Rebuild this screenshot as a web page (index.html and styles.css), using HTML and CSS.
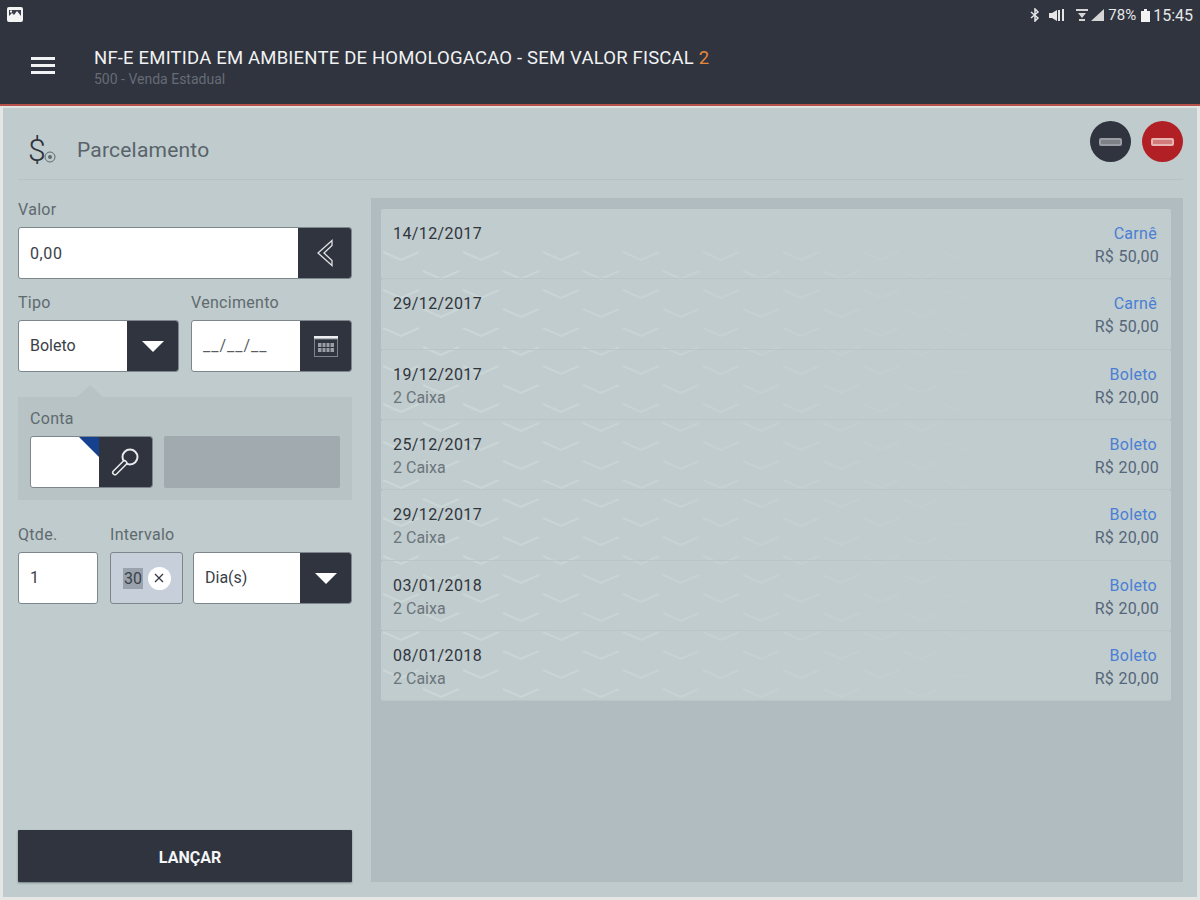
FILE: index.html
```html
<!DOCTYPE html>
<html lang="pt-BR">
<head>
  <meta charset="UTF-8" />
  <title>Parcelamento</title>
  <link rel="stylesheet" href="styles.css">
</head>
<body>
  <header class="appbar">
    <div class="statusbar">
      <svg class="status-pic" width="16" height="16" viewBox="0 0 16 16">
        <rect x="0" y="0" width="16" height="15" rx="2" fill="#f4f4f4"/>
        <path d="M2 3h12v6H2z" fill="#3a3f49"/>
        <path d="M2 9l3-3 2 2 3-4 4 5z" fill="#f4f4f4"/>
        <rect x="3" y="3.500" width="2" height="2" fill="#f4f4f4"/>
      </svg>
      <div class="status-right">
        <svg width="10" height="14" viewBox="0 0 10 14" fill="none" stroke="#e6e6e6" stroke-width="1.500"><path d="M1 4l7 6-3 3V1l3 3-7 6"/></svg>
        <svg class="mute" width="16" height="14" viewBox="0 0 16 14"><path d="M0 4h3l5-3v11L3 9H0z" fill="#e6e6e6" transform="translate(0 1)"/><path d="M10 2v11M14 1v12" stroke="#e6e6e6" stroke-width="2"/></svg>
        <svg class="wifi" width="12" height="14" viewBox="0 0 12 14" fill="#d5d5d5"><path d="M0 1h12v2H0zM2 5h8L6 10zM3 11h6v2H3z"/></svg>
        <svg width="14" height="14" viewBox="0 0 14 14" fill="#d5d5d5"><path d="M0 13L13 1v12z"/></svg>
        <span class="status-text status-pct">78%</span>
        <svg width="9" height="13" viewBox="0 0 9 13" fill="#f2f2f2"><path d="M0 2h3V0h3v2h3v11H0z"/></svg>
        <span class="status-text status-time">15:45</span>
      </div>
    </div>
    <div class="titlebar">
      <div class="burger"><span></span><span></span><span></span></div>
      <div class="titles">
        <div class="title">NF-E EMITIDA EM AMBIENTE DE HOMOLOGACAO - SEM VALOR FISCAL <span class="title-num">2</span></div>
        <div class="subtitle">500 - Venda Estadual</div>
      </div>
    </div>
  </header>

  <main class="page">
    <div class="page-head">
      <div class="page-title">
        <span class="dollar">$<svg width="12" height="12" viewBox="0 0 12 12" fill="none" stroke="#5f6a70"><circle cx="6" cy="6" r="5"/><circle cx="6" cy="6" r="2" fill="#5f6a70" stroke="none"/></svg></span>
        <span class="page-name">Parcelamento</span>
      </div>
      <div class="head-btns">
        <button class="round-btn"><span></span></button>
        <button class="round-btn red"><span></span></button>
      </div>
    </div>

    <div class="content">
      <form class="form">
        <div class="field">
          <label>Valor</label>
          <div class="input">
            <span class="input-val input-money">0,00</span>
            <span class="addon addon-wide">
              <svg width="18" height="28" viewBox="0 0 18 28" fill="none" stroke="#dfe2e4" stroke-width="1.300"><path d="M16 1.500L2 14l14 12.500v-5L8 14l8-7.500z"/></svg>
            </span>
          </div>
        </div>

        <div class="row row-tipo">
          <div class="field">
            <label>Tipo</label>
            <div class="input">
              <span class="input-val">Boleto</span>
              <span class="addon"><span class="caret"></span></span>
            </div>
          </div>
          <div class="field">
            <label>Vencimento</label>
            <div class="input">
              <span class="input-val mask">__/__/__</span>
              <span class="addon addon-cal">
                <svg width="24" height="21" viewBox="0 0 24 21"><rect width="24" height="3" fill="#eceef0"/><rect x="0.500" y="3" width="23" height="17.500" fill="none" stroke="#7e848b"/><path d="M4 7h16v9H4z" fill="#9a9fa5"/><path d="M4 11.500h16M8 7v9M12 7v9M16 7v9" stroke="#2f343e"/></svg>
              </span>
            </div>
          </div>
        </div>

        <div class="conta">
          <label>Conta</label>
          <div class="conta-row">
            <div class="input conta-input">
              <span class="input-val"><i class="corner"></i></span>
              <span class="addon addon-search">
                <svg width="30" height="32" viewBox="0 0 30 32" fill="none" stroke-linecap="round"><circle cx="20" cy="11" r="7.500" stroke="#e8eaec" stroke-width="2"/><path d="M14.500 17L5 26.500" stroke="#e8eaec" stroke-width="6"/><path d="M14.500 17L5 26.500" stroke="#2f343e" stroke-width="3"/></svg>
              </span>
            </div>
            <div class="conta-name"></div>
          </div>
        </div>

        <div class="row row-qtde">
          <div class="field qtde">
            <label>Qtde.</label>
            <div class="input"><span class="input-val">1</span></div>
          </div>
          <div class="field intervalo">
            <label>Intervalo</label>
            <div class="input focused">
              <span class="selected">30</span>
              <span class="clear">
                <svg width="10" height="10" viewBox="0 0 10 10" stroke="#333a44" stroke-width="1.300"><path d="M1 1l8 8M9 1l-8 8"/></svg>
              </span>
            </div>
          </div>
          <div class="field periodo">
            <div class="input">
              <span class="input-val">Dia(s)</span>
              <span class="addon"><span class="caret"></span></span>
            </div>
          </div>
        </div>

        <button type="button" class="lancar">LANÇAR</button>
      </form>

      <section class="list-panel">
        <svg class="chevrons" width="790" height="450">
          <defs>
            <pattern id="chev" width="80" height="38" patternUnits="userSpaceOnUse">
              <path d="M2 4l18 8 18-8M42 23l18 8 18-8" fill="none" stroke="#e4ecec" stroke-width="2"/>
            </pattern>
            <linearGradient id="fade">
              <stop offset="0.100" stop-color="#fff" stop-opacity="0.800"/>
              <stop offset="0.800" stop-color="#fff" stop-opacity="0"/>
            </linearGradient>
            <mask id="chev-fade">
              <rect width="790" height="450" fill="url(#fade)"/>
            </mask>
          </defs>
          <rect width="790" height="450" fill="url(#chev)" mask="url(#chev-fade)"/>
        </svg>
        <ul class="list">
          <li class="item"><div><div class="date">14/12/2017</div></div><div class="item-right"><div class="kind">Carnê</div><div class="price">R$ 50,00</div></div></li>
          <li class="item"><div><div class="date">29/12/2017</div></div><div class="item-right"><div class="kind">Carnê</div><div class="price">R$ 50,00</div></div></li>
          <li class="item"><div><div class="date">19/12/2017</div><div class="note">2 Caixa</div></div><div class="item-right"><div class="kind">Boleto</div><div class="price">R$ 20,00</div></div></li>
          <li class="item"><div><div class="date">25/12/2017</div><div class="note">2 Caixa</div></div><div class="item-right"><div class="kind">Boleto</div><div class="price">R$ 20,00</div></div></li>
          <li class="item"><div><div class="date">29/12/2017</div><div class="note">2 Caixa</div></div><div class="item-right"><div class="kind">Boleto</div><div class="price">R$ 20,00</div></div></li>
          <li class="item"><div><div class="date">03/01/2018</div><div class="note">2 Caixa</div></div><div class="item-right"><div class="kind">Boleto</div><div class="price">R$ 20,00</div></div></li>
          <li class="item"><div><div class="date">08/01/2018</div><div class="note">2 Caixa</div></div><div class="item-right"><div class="kind">Boleto</div><div class="price">R$ 20,00</div></div></li>
        </ul>
      </section>
    </div>
  </main>
</body>
</html>
```

FILE: styles.css
```css
* {
  box-sizing: border-box;
}
html, body {
  height: 100%;
}
body {
  margin: 0;
  width: 1200px;
  height: 900px;
  overflow: hidden;
  font-family: Roboto, "Liberation Sans", sans-serif;
  background-color: #e4e7e4;
  color: #2f343e;
}

/* top bar */
.appbar {
  height: 106px;
  background-color: #2f343e;
  border-bottom: 2px solid #b8504c;
  color: #f1f2f3;
}
.statusbar {
  display: flex;
  justify-content: space-between;
  align-items: center;
  height: 30px;
  padding: 0 7px;
}
.status-right {
  display: flex;
  align-items: center;
  gap: 3px;
}
.mute {
  margin: 0 8px 0 6px;
}
.status-text {
  font-size: 15px;
  color: #e6e7e8;
}
.status-pct {
  margin-right: 2px;
}
.status-time {
  font-size: 16px;
}
.titlebar {
  display: flex;
  align-items: center;
  height: 70px;
}
.burger {
  display: flex;
  flex-direction: column;
  gap: 4px;
  width: 24px;
  margin: 0 39px 0 31px;
}
.burger span {
  height: 3px;
  background-color: #f1f2f3;
}
.titles {
  padding-top: 4px;
}
.title {
  font-size: 18.5px;
  line-height: 24px;
  letter-spacing: 0.19px;
}
.title-num {
  color: #e8873c;
}
.subtitle {
  font-size: 14px;
  line-height: 18px;
  color: #666c76;
}

/* page */
.page {
  height: 791px;
  margin: 0 3px;
  padding-top: 2px;
  background-color: #bfcbcc;
  border-top: 2px solid #dfe4e3;
}
.page-head {
  display: flex;
  justify-content: space-between;
  align-items: center;
  height: 70px;
  margin: 0 14px 0 15px;
  border-bottom: 1px solid #b6c2c3;
}
.page-title {
  display: flex;
  align-items: center;
  margin-top: 10px;
}
.dollar {
  display: flex;
  align-items: flex-end;
  width: 59px;
  padding-left: 10px;
  font-size: 32px;
  font-weight: 300;
  color: #2f343e;
}
.dollar svg {
  margin: 0 0 6px -2px;
}
.page-name {
  font-size: 21px;
  letter-spacing: 0.2px;
  color: #59636a;
}
.head-btns {
  display: flex;
  gap: 11px;
  margin-bottom: 6px;
}
.round-btn {
  display: flex;
  align-items: center;
  justify-content: center;
  width: 41px;
  height: 41px;
  padding: 0;
  border: none;
  border-radius: 50%;
  background-color: #2f343e;
}
.round-btn span {
  width: 23px;
  height: 8px;
  border: 2px solid #9a9ea4;
  border-radius: 2px;
  background-color: #7d8287;
}
.round-btn.red {
  background-color: #b12025;
}
.round-btn.red span {
  border-color: #e8b4b2;
  background-color: #d27b7b;
}

.content {
  display: flex;
  height: 703px;
  padding: 18px 14px 0 15px;
}

/* left form */
.form {
  position: relative;
  width: 334px;
  height: 684px;
  margin-right: 19px;
}
.field > label {
  margin-top: 3px;
}
label {
  display: block;
  height: 26px;
  font-size: 16px;
  line-height: 18px;
  letter-spacing: 0.3px;
  color: #5f6a70;
}
.input {
  display: flex;
  height: 52px;
  border-radius: 3px;
  border: 1px solid #7d868b;
  background-color: #fff;
  overflow: hidden;
}
.input-val {
  flex: 1;
  padding-left: 11px;
  font-size: 16px;
  line-height: 50px;
  color: #3a4047;
}
.input-money {
  line-height: 52px;
  letter-spacing: 0.6px;
}
.input-val.mask {
  color: #585d64;
  letter-spacing: 1px;
}
.addon {
  display: flex;
  align-items: center;
  justify-content: center;
  flex: none;
  width: 51px;
  background-color: #2f343e;
}
.addon-wide {
  width: 53px;
}
.caret {
  width: 0;
  height: 0;
  border-left: 11px solid transparent;
  border-right: 11px solid transparent;
  border-top: 11px solid #fff;
}
.row {
  display: flex;
}
.row-tipo {
  gap: 12px;
  margin-top: 12px;
}
.row-tipo .field {
  width: 161px;
}

.conta {
  position: relative;
  height: 103px;
  margin-top: 25px;
  padding: 13px 12px 0;
  background-color: #b7c3c4;
}
.conta::before {
  content: "";
  position: absolute;
  top: -12px;
  left: 59px;
  border-left: 13px solid transparent;
  border-right: 13px solid transparent;
  border-bottom: 12px solid #b7c3c4;
}
.conta-row {
  display: flex;
  gap: 11px;
}
.conta-input {
  width: 123px;
}
.conta-input .input-val {
  position: relative;
}
.corner {
  position: absolute;
  top: 0;
  right: 0;
  width: 0;
  height: 0;
  border-top: 20px solid #16418f;
  border-left: 20px solid transparent;
}
.addon-search {
  width: 53px;
}
.conta-name {
  width: 177px;
  height: 52px;
  border-radius: 2px;
  background-color: #a1abaf;
}

.row-qtde {
  margin-top: 23px;
  align-items: flex-end;
}
.qtde {
  width: 80px;
  margin-right: 12px;
}
.intervalo {
  width: 73px;
  margin-right: 10px;
}
.periodo {
  width: 159px;
}
.focused {
  align-items: center;
  padding-left: 12px;
  background-color: #c7d0da;
}
.selected {
  font-size: 16px;
  line-height: 21px;
  padding: 0 1px;
  background-color: #9aa3ad;
  color: #3a4047;
}
.clear {
  display: flex;
  align-items: center;
  justify-content: center;
  width: 23px;
  height: 23px;
  margin-left: 5px;
  border-radius: 50%;
  background-color: #fff;
}
.lancar {
  position: absolute;
  left: 0;
  bottom: 0;
  width: 100%;
  height: 52px;
  padding: 2px 0 0 10px;
  border: none;
  border-radius: 1px;
  background-color: #2f343e;
  color: #f4f5f6;
  font-family: inherit;
  font-size: 16px;
  font-weight: 700;
  box-shadow: 0 1px 2px rgba(40, 50, 60, 0.5);
}

/* right list */
.list-panel {
  position: relative;
  width: 812px;
  height: 684px;
  background-color: #b1bcc0;
  overflow: hidden;
}
.chevrons {
  position: absolute;
  top: 50px;
  left: 10px;
  filter: blur(0.6px);
}
.list {
  position: relative;
  margin: 0;
  padding: 11px 12px 0 10px;
  list-style: none;
}
.item {
  display: flex;
  justify-content: space-between;
  height: 70.33px;
  padding: 14px 12px 0;
  border-bottom: 1px solid #b9c5c6;
  border-radius: 2px;
  background-color: rgba(197, 209, 209, 0.75);
}
.date {
  font-size: 16px;
  line-height: 22px;
  letter-spacing: 0.4px;
  color: #30353d;
}
.note {
  font-size: 16px;
  line-height: 24px;
  color: #6b757b;
}
.item-right {
  text-align: right;
}
.kind {
  font-size: 16px;
  line-height: 22px;
  letter-spacing: 0.3px;
  padding-right: 2px;
  color: #4a7fd4;
}
.price {
  font-size: 16px;
  line-height: 23px;
  letter-spacing: 0.3px;
  color: #56657a;
}
```
